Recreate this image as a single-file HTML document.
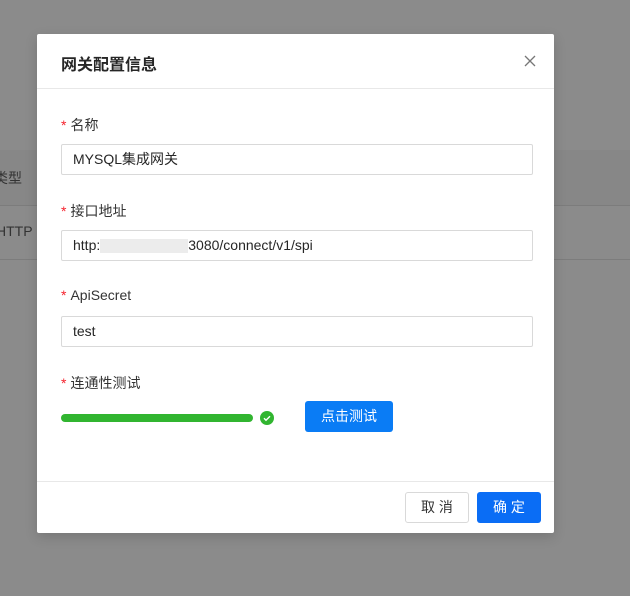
<!DOCTYPE html>
<html><head><meta charset="utf-8"><style>
*{box-sizing:border-box;margin:0;padding:0}
body{width:630px;height:596px;background:#8b8b8b;position:relative;overflow:hidden;font-family:"Liberation Sans","Noto Sans CJK SC",sans-serif;}
.bg{position:absolute;left:0;right:0}
.m{position:absolute;left:37px;top:34px;width:517px;height:499px;background:#fff;border-radius:2px;box-shadow:0 4px 12px rgba(0,0,0,.15)}
.t{position:absolute;left:24px;top:17px;font-size:16px;font-weight:bold;color:#262626}
.x{position:absolute;left:487px;top:21px;width:12px;height:12px}
.hl{position:absolute;left:0;right:0;height:1px;background:#e8e8e8}
.lb{position:absolute;left:24px;font-size:14px;color:#333}
.lb b{color:#f5222d;font-weight:normal;font-family:"Liberation Sans",sans-serif;margin-right:4px}
.in{position:absolute;left:24px;width:472px;height:31px;border:1px solid #d9d9d9;border-radius:2px;padding:0 11px;font-size:14px;line-height:29px;color:#262626}
.btn{position:absolute;height:31px;border-radius:3px;font-size:14px;text-align:center;line-height:31px}
</style></head><body>
<div class="bg" style="top:150px;height:55px;background:#878787"></div>
<div class="bg" style="top:205px;height:1px;background:#7c7c7c"></div>
<div class="bg" style="top:259px;height:1px;background:#7c7c7c"></div>
<div style="position:absolute;left:-6px;top:168px;font-size:14px;color:#333">类型</div>
<div style="position:absolute;left:-4px;top:223px;font-size:14px;color:#333">HTTP</div>
<div class="m">
<div class="t">网关配置信息</div>
<svg class="x" viewBox="0 0 12 12"><path d="M1 1L11 11M11 1L1 11" stroke="#777" stroke-width="1.3"/></svg>
<div class="hl" style="top:54px"></div>
<div class="lb" style="top:81px"><b>*</b>名称</div>
<div class="in" style="top:110px">MYSQL集成网关</div>
<div class="lb" style="top:167px"><b>*</b>接口地址</div>
<div class="in" style="top:196px">http:<span style="display:inline-block;width:88px;height:14px;background:#ececec;vertical-align:middle"></span>3080/connect/v1/spi</div>
<div class="lb" style="top:253px"><b>*</b>ApiSecret</div>
<div class="in" style="top:282px">test</div>
<div class="lb" style="top:339px"><b>*</b>连通性测试</div>
<div style="position:absolute;left:24px;top:380px;width:192px;height:8px;border-radius:4px;background:#31b530"></div>
<svg style="position:absolute;left:223px;top:377px" width="14" height="14" viewBox="0 0 14 14"><circle cx="7" cy="7" r="7" fill="#31b530"/><path d="M4 7.2l2 2 4-4" stroke="#fff" stroke-width="1.4" fill="none"/></svg>
<div class="btn" style="left:268px;top:367px;width:88px;background:#0a7cf5;color:#fff">点击测试</div>
<div class="hl" style="top:447px"></div>
<div class="btn" style="left:368px;top:458px;width:64px;border:1px solid #d9d9d9;color:#333;line-height:29px">取 消</div>
<div class="btn" style="left:440px;top:458px;width:64px;background:#0a6df5;color:#fff">确 定</div>
</div>
</body></html>
